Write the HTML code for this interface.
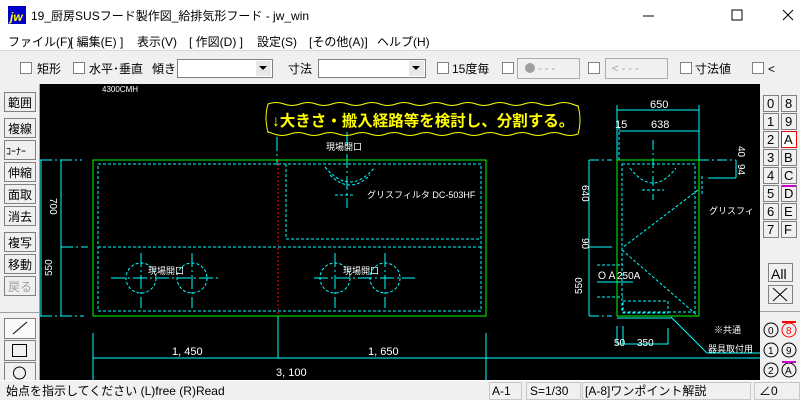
<!DOCTYPE html>
<html><head><meta charset="utf-8"><style>
*{margin:0;padding:0}
body{width:800px;height:400px;overflow:hidden;background:#f0f0f0;font-family:"Liberation Sans","Noto Sans CJK JP",sans-serif}
svg{display:block}
text{font-family:"Liberation Sans","Noto Sans CJK JP",sans-serif}
</style></head><body>
<svg width="800" height="400" xmlns="http://www.w3.org/2000/svg">
<rect x="0" y="0" width="800" height="50" fill="#fff"/>
<rect x="8" y="6" width="18" height="18" fill="#0000c8"/>
<text x="10" y="21" font-size="12" font-weight="bold" font-style="italic" fill="#ff0">jw</text>
<text x="31" y="20" font-size="12" fill="#000">19_厨房SUSフード製作図_給排気形フード - jw_win</text>
<line x1="643" y1="16" x2="654" y2="16" stroke="#000"/>
<rect x="732" y="10" width="10" height="10" fill="none" stroke="#000"/>
<path d="M687 10l10 10M697 10l-10 10" stroke="#000" transform="translate(96,0)"/>
<g font-size="12" fill="#000">
<text x="8" y="46">ファイル(F)</text><text x="70" y="46">[ 編集(E) ]</text><text x="137" y="46">表示(V)</text>
<text x="189" y="46">[ 作図(D) ]</text><text x="257" y="46">設定(S)</text><text x="309" y="46">[その他(A)]</text><text x="377" y="46">ヘルプ(H)</text>
</g>
<line x1="0" y1="50.5" x2="800" y2="50.5" stroke="#d8d8d8"/>
<g fill="#fff" stroke="#808080">
<rect x="20.5" y="62.5" width="11" height="11"/><rect x="73.5" y="62.5" width="11" height="11"/>
<rect x="437.5" y="62.5" width="11" height="11"/><rect x="502.5" y="62.5" width="11" height="11"/>
<rect x="588.5" y="62.5" width="11" height="11"/><rect x="680.5" y="62.5" width="11" height="11"/>
<rect x="752.5" y="62.5" width="11" height="11"/>
<rect x="177.5" y="59.5" width="95" height="18"/><rect x="318.5" y="59.5" width="107" height="18"/>
</g>
<rect x="256" y="61" width="15" height="15" fill="#e8e8e8"/><rect x="409" y="61" width="15" height="15" fill="#e8e8e8"/>
<path d="M259 66h8l-4 4z M412 66h8l-4 4z" fill="#000"/>
<rect x="517.5" y="58.5" width="62" height="20" fill="#f0f0f0" stroke="#adadad"/>
<rect x="605.5" y="58.5" width="62" height="20" fill="#f0f0f0" stroke="#adadad"/>
<circle cx="530" cy="68" r="5" fill="#a0a0a0"/>
<g font-size="12" fill="#000">
<text x="37" y="73">矩形</text><text x="89" y="73">水平･垂直</text><text x="152" y="73">傾き</text><text x="288" y="73">寸法</text>
<text x="452" y="73">15度毎</text><text x="695" y="73">寸法値</text><text x="768" y="73">&lt;</text>
</g>
<text x="538" y="72" font-size="11" fill="#a0a0a0">- - -</text>
<text x="612" y="72" font-size="11" fill="#a0a0a0">&lt; - - -</text>
<rect x="40" y="84" width="720" height="296" fill="#000"/>
<g fill="none" stroke="#0ff" stroke-width="1">
<line x1="41" y1="160" x2="41" y2="316"/><line x1="61" y1="160" x2="61" y2="316"/>
<line x1="40" y1="160" x2="82" y2="160" stroke-dasharray="12,3,2,3"/>
<line x1="61" y1="247" x2="88" y2="247" stroke-dasharray="12,3,2,3"/>
<line x1="40" y1="316" x2="84" y2="316" stroke-dasharray="12,3,2,3"/>
<line x1="93" y1="358" x2="760" y2="358"/>
<line x1="93" y1="333" x2="93" y2="380"/><line x1="278" y1="316" x2="278" y2="358"/>
<line x1="486" y1="333" x2="486" y2="380"/>
<g stroke-dasharray="3,2">
<rect x="98" y="164" width="383" height="147"/>
<line x1="98" y1="247" x2="481" y2="247"/>
<path d="M286 164V239H481"/>
<circle cx="141" cy="278" r="15"/><circle cx="192" cy="278" r="15"/>
<circle cx="335" cy="278" r="15"/><circle cx="385" cy="278" r="15"/>
<path d="M330 175q20 20 40 0M325 167q25 30 50 0M335 195h20"/>
</g>
<g stroke-dasharray="14,3,2,3">
<line x1="111" y1="278" x2="221" y2="278"/><line x1="314" y1="278" x2="415" y2="278"/>
<line x1="141" y1="253" x2="141" y2="308"/><line x1="192" y1="253" x2="192" y2="308"/>
<line x1="335" y1="253" x2="335" y2="308"/><line x1="385" y1="253" x2="385" y2="308"/>
<line x1="347" y1="132" x2="347" y2="208"/>
<line x1="277" y1="137" x2="277" y2="165"/>
</g>
<line x1="617" y1="110" x2="699" y2="110"/><line x1="617" y1="105" x2="617" y2="160"/><line x1="699" y1="105" x2="699" y2="160"/>
<line x1="619" y1="131" x2="699" y2="131"/><line x1="619" y1="127" x2="619" y2="160" stroke-dasharray="3,2"/>
<line x1="589" y1="160" x2="589" y2="316"/>
<line x1="589" y1="160" x2="612" y2="160" stroke-dasharray="10,3,2,3"/>
<line x1="589" y1="247" x2="612" y2="247"/><line x1="589" y1="316" x2="612" y2="316" stroke-dasharray="10,3,2,3"/>
<line x1="699" y1="160" x2="736" y2="160" stroke-dasharray="10,3,2,3"/>
<line x1="708" y1="178" x2="736" y2="178"/><line x1="736" y1="160" x2="736" y2="178"/>
<line x1="653" y1="140" x2="653" y2="200" stroke-dasharray="10,3,2,3"/>
<g stroke-dasharray="3,2">
<rect x="622" y="164" width="73" height="148"/>
<path d="M698 190L622 248M622 250L698 316"/>
<rect x="623" y="301" width="45" height="12"/>
<path d="M597 265h26M597 297h26M630 168q23 30 46 0M642 190h22M702 176v20"/>
</g>
<line x1="597" y1="282" x2="633" y2="282"/>
<line x1="617" y1="318" x2="671" y2="318"/>
<path d="M617 326v18h51v-16M623 326v18"/>
<line x1="671" y1="317" x2="707" y2="353"/><line x1="707" y1="353" x2="760" y2="353"/>
</g>
<rect x="93" y="160" width="393" height="156" fill="none" stroke="#0f0"/>
<rect x="617" y="160" width="82" height="156" fill="none" stroke="#0f0"/>
<line x1="278" y1="160" x2="278" y2="316" stroke="#f00" stroke-dasharray="2,2"/>
<path d="M268 104q8-3 16 0t16 0t16 0t16 0t16 0t16 0t16 0t16 0t16 0t16 0t16 0t16 0t16 0t16 0t16 0t16 0t16 0t16 0t16 0t6 2q4 14 0 28q-8 3-16 0t-16 0t-16 0t-16 0t-16 0t-16 0t-16 0t-16 0t-16 0t-16 0t-16 0t-16 0t-16 0t-16 0t-16 0t-16 0t-16 0t-16 0t-16 0t-6-2q-4-14 0-28z" fill="none" stroke="#ff0"/>
<text x="272" y="126" font-size="15.5" font-weight="bold" fill="#ff0">↓大きさ・搬入経路等を検討し、分割する。</text>
<g font-size="9" fill="#fff">
<text x="102" y="92" font-size="8">4300CMH</text>
<text x="326" y="150">現場開口</text>
<text x="367" y="198">グリスフィルタ DC-503HF</text>
<text x="148" y="274">現場開口</text><text x="343" y="274">現場開口</text>
<text x="172" y="355" font-size="11">1, 450</text><text x="368" y="355" font-size="11">1, 650</text>
<text x="276" y="376" font-size="11">3, 100</text>
<text x="650" y="108" font-size="11">650</text><text x="615" y="128" font-size="11">15</text><text x="651" y="128" font-size="11">638</text>
<text x="597" y="279" font-size="10">ＯＡ250A</text>
<text x="709" y="214">グリスフィ</text>
<text x="714" y="333">※共通</text><text x="708" y="352">器具取付用</text>
<text x="614" y="346" font-size="10">50</text><text x="637" y="346" font-size="10">350</text>
<text transform="translate(50,198) rotate(90)" font-size="10">700</text>
<text transform="translate(52,276) rotate(-90)" font-size="10">550</text>
<text transform="translate(582,185) rotate(90)" font-size="10">640</text>
<text transform="translate(582,238) rotate(90)" font-size="10">90</text>
<text transform="translate(582,294) rotate(-90)" font-size="10">550</text>
<text transform="translate(738,146) rotate(90)" font-size="10">40</text>
<text transform="translate(738,164) rotate(90)" font-size="10">94</text>
</g>
<line x1="39.5" y1="84" x2="39.5" y2="380" stroke="#a0a0a0"/>
<g fill="#f0f0f0" stroke="#808080">
<rect x="4.5" y="92.5" width="31" height="19"/><rect x="4.5" y="118.5" width="31" height="19"/>
<rect x="4.5" y="140.5" width="31" height="19"/><rect x="4.5" y="162.5" width="31" height="19"/>
<rect x="4.5" y="184.5" width="31" height="19"/><rect x="4.5" y="206.5" width="31" height="19"/>
<rect x="4.5" y="232.5" width="31" height="19"/><rect x="4.5" y="254.5" width="31" height="19"/>
<rect x="4.5" y="276.5" width="31" height="19"/>
<rect x="4.5" y="318.5" width="31" height="20" fill="#fafafa"/><rect x="4.5" y="340.5" width="31" height="20"/>
<rect x="4.5" y="362.5" width="31" height="18"/>
</g>
<line x1="0" y1="312.5" x2="40" y2="312.5" stroke="#a0a0a0"/>
<g font-size="12" fill="#000">
<text x="8" y="107">範囲</text><text x="8" y="133">複線</text><text x="6" y="155" font-size="10">ｺｰﾅｰ</text>
<text x="8" y="177">伸縮</text><text x="8" y="199">面取</text><text x="8" y="221">消去</text>
<text x="8" y="247">複写</text><text x="8" y="269">移動</text><text x="8" y="291" fill="#a0a0a0">戻る</text>
</g>
<line x1="13" y1="334" x2="27" y2="322" stroke="#000"/>
<rect x="12.5" y="344.5" width="14" height="12" fill="none" stroke="#000"/>
<circle cx="19.5" cy="373" r="6" fill="none" stroke="#000"/>
<rect x="760" y="84" width="40" height="296" fill="#f0f0f0"/>
<g stroke="#808080">
<rect x="763.5" y="95.5" width="15" height="16" fill="#f0f0f0"/><rect x="781.5" y="95.5" width="15" height="16" fill="#f0f0f0"/>
<rect x="763.5" y="113.5" width="15" height="16" fill="#f0f0f0"/><rect x="781.5" y="113.5" width="15" height="16" fill="#f0f0f0"/>
<rect x="763.5" y="131.5" width="15" height="16" fill="#f0f0f0"/><rect x="781.5" y="131.5" width="15" height="16" fill="#fff" stroke="#f00"/>
<rect x="763.5" y="149.5" width="15" height="16" fill="#f0f0f0"/><rect x="781.5" y="149.5" width="15" height="16" fill="#f0f0f0"/>
<rect x="763.5" y="167.5" width="15" height="16" fill="#f0f0f0"/><rect x="781.5" y="167.5" width="15" height="16" fill="#f0f0f0"/>
<rect x="763.5" y="185.5" width="15" height="16" fill="#f0f0f0"/><rect x="781.5" y="185.5" width="15" height="16" fill="#f0f0f0"/>
<rect x="763.5" y="203.5" width="15" height="16" fill="#f0f0f0"/><rect x="781.5" y="203.5" width="15" height="16" fill="#f0f0f0"/>
<rect x="763.5" y="221.5" width="15" height="16" fill="#f0f0f0"/><rect x="781.5" y="221.5" width="15" height="16" fill="#f0f0f0"/>
<rect x="768.5" y="263.5" width="24" height="18" fill="#f0f0f0"/><rect x="768.5" y="285.5" width="24" height="18" fill="#f0f0f0"/>
</g>
<line x1="782" y1="186" x2="796" y2="186" stroke="#c0c" stroke-width="2"/>
<g font-family="Liberation Serif" font-size="13" fill="#000">
<text x="767" y="108">0</text><text x="785" y="108">8</text><text x="767" y="126">1</text><text x="785" y="126">9</text>
<text x="767" y="144">2</text><text x="784" y="144">A</text><text x="767" y="162">3</text><text x="784" y="162">B</text>
<text x="767" y="180">4</text><text x="784" y="180">C</text><text x="767" y="198">5</text><text x="784" y="198">D</text>
<text x="767" y="216">6</text><text x="784" y="216">E</text><text x="767" y="234">7</text><text x="784" y="234">F</text>
</g>
<text x="771" y="279" font-size="14" fill="#000">All</text>
<path d="M773 288l14 13M787 288l-14 13" stroke="#000"/>
<line x1="760" y1="311.5" x2="800" y2="311.5" stroke="#a0a0a0"/>
<g fill="none" stroke="#000"><circle cx="771" cy="330" r="7"/><circle cx="771" cy="350" r="7"/><circle cx="771" cy="370" r="7"/>
<circle cx="789" cy="350" r="7"/><circle cx="789" cy="370" r="7"/></g>
<circle cx="789" cy="330" r="7" fill="none" stroke="#f00"/>
<line x1="782" y1="322" x2="796" y2="322" stroke="#f00" stroke-width="2"/>
<line x1="782" y1="362" x2="796" y2="362" stroke="#c0c" stroke-width="2"/>
<g font-size="10" fill="#000"><text x="768" y="334">0</text><text x="786" y="334" fill="#f00">8</text>
<text x="768" y="354">1</text><text x="786" y="354">9</text><text x="768" y="374">2</text><text x="785" y="374">A</text></g>
<rect x="0" y="380" width="800" height="20" fill="#f0f0f0"/>
<line x1="0" y1="380.5" x2="800" y2="380.5" stroke="#fff"/>
<text x="6" y="395" font-size="12" fill="#000">始点を指示してください (L)free (R)Read</text>
<g fill="none" stroke="#c8c8c8"><rect x="489.5" y="382.5" width="32" height="17"/><rect x="526.5" y="382.5" width="54" height="17"/>
<rect x="582.5" y="382.5" width="168" height="17"/><rect x="754.5" y="382.5" width="45" height="17"/></g>
<g font-size="12" fill="#000"><text x="492" y="395">A-1</text><text x="530" y="395">S=1/30</text>
<text x="585" y="395">[A-8]ワンポイント解説</text><text x="759" y="395">∠0</text></g>
</svg>
</body></html>
